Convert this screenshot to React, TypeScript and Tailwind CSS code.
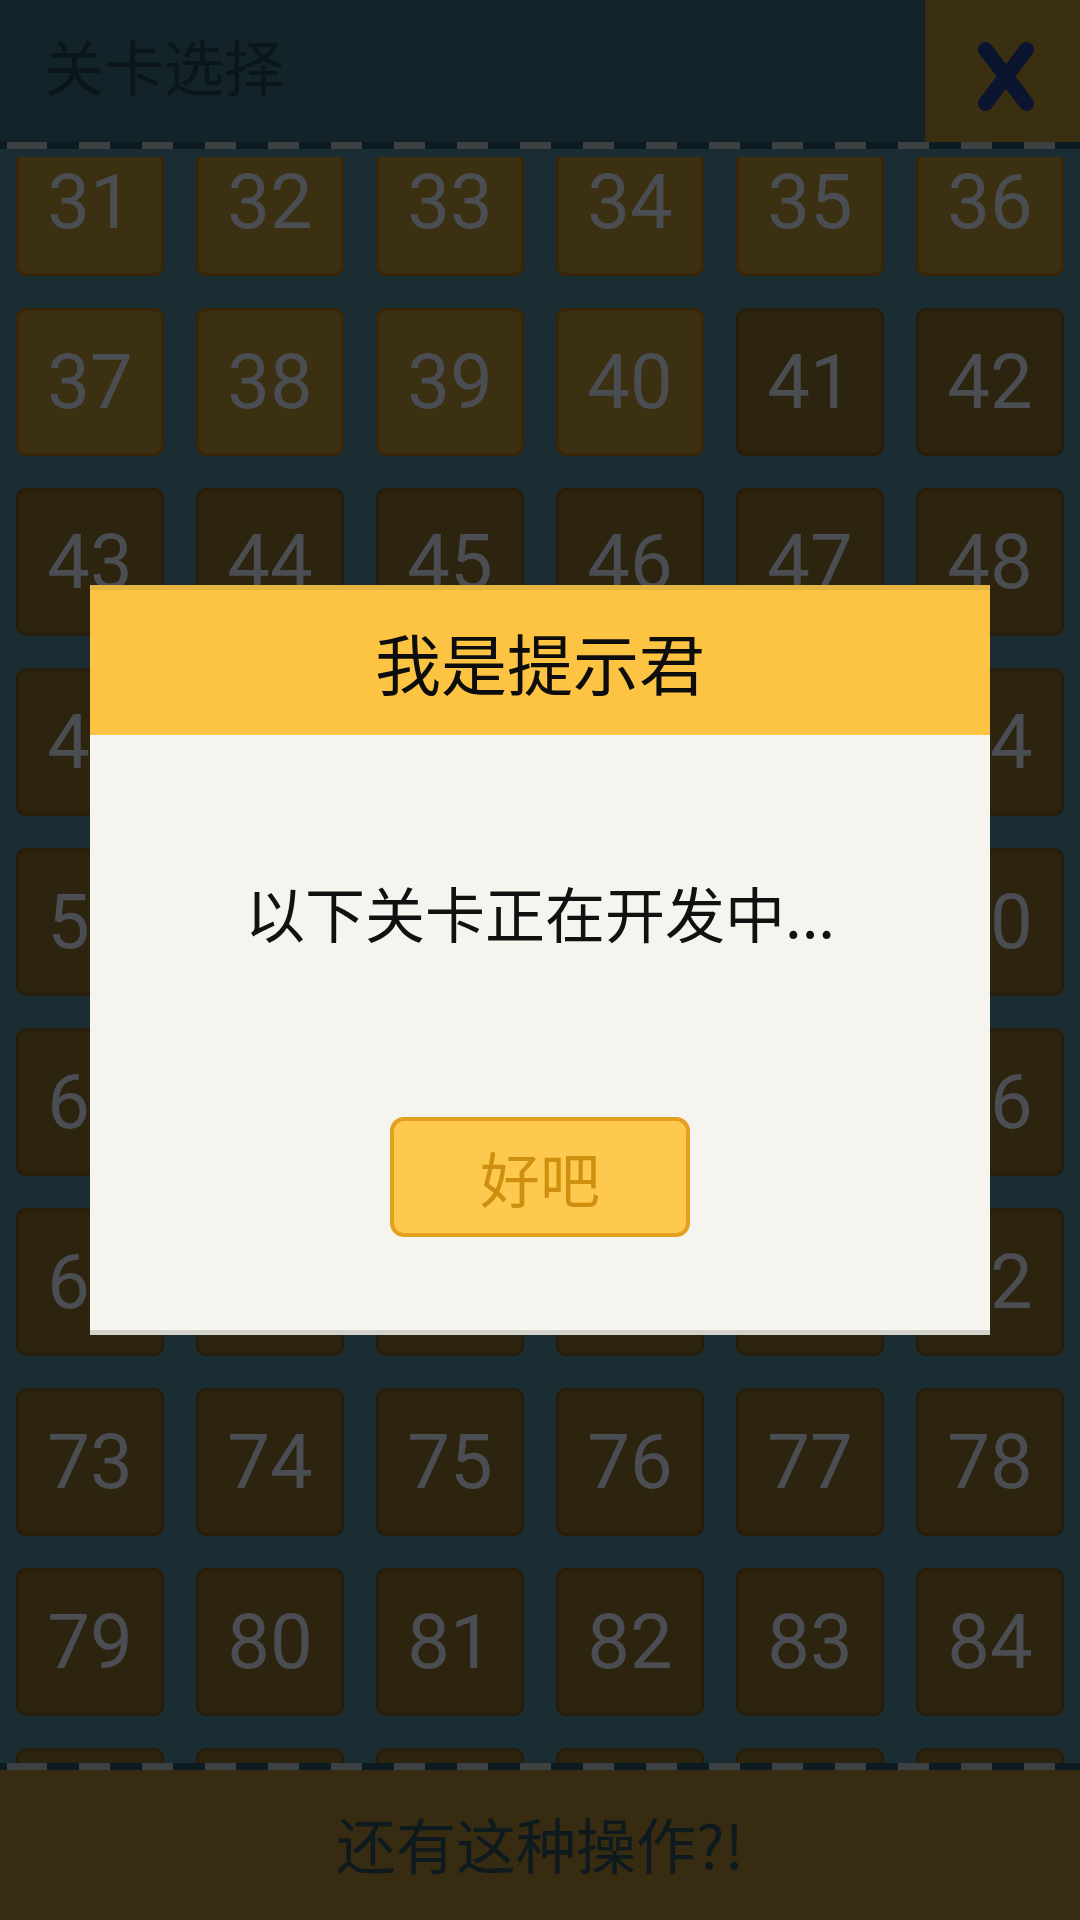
import React from "react";

const CJK = { fontFamily: '"Noto Sans CJK SC", "Noto Sans", sans-serif' };
const NUM = { fontFamily: 'Roboto, "Liberation Sans", sans-serif' };

const levels = Array.from({ length: 60 }, (_, i) => i + 31);
const UNLOCKED_MAX = 40;

function Dashes() {
  return (
    <div className="h-[7px] w-full bg-[#0c1b21] bg-[repeating-linear-gradient(90deg,#3e4143_0px,#3e4143_31px,transparent_31px,transparent_63px)] bg-[position:16px_0]" />
  );
}

function Tile({ n }: { n: number }) {
  const open = n <= UNLOCKED_MAX;
  return (
    <div
      className={
        open
          ? "flex h-[148px] w-[148px] items-center justify-center rounded-[10px] border-[3px] border-[#3a2606] bg-[#3c3012]"
          : "flex h-[148px] w-[148px] items-center justify-center rounded-[10px] border-[3px] border-[#291d09] bg-[#2d2410]"
      }
    >
      <span className="text-[76px] leading-none text-[#4a4d52]" style={NUM}>
        {n}
      </span>
    </div>
  );
}

export default function App() {
  return (
    <div className="relative flex h-[1920px] w-[1080px] flex-col overflow-hidden bg-[#192d32]" style={CJK}>
      {/* top bar */}
      <header className="flex h-[142px] shrink-0 bg-[#12242a]">
        <h1 className="flex-1 pl-[44px] pt-[35px] text-[60px] font-normal leading-[60px] text-[#0b161a]">
          关卡选择
        </h1>
        <button className="h-[142px] w-[155px] bg-[#3a2f10]">
          <svg width="155" height="142" viewBox="0 0 155 142">
            <g stroke="#0b1530" strokeWidth="15" strokeLinecap="round">
              <line x1="60.5" y1="49.5" x2="101.5" y2="103.5" />
              <line x1="101.5" y1="49.5" x2="60.5" y2="103.5" />
            </g>
          </svg>
        </button>
      </header>
      <Dashes />

      {/* level list */}
      <main className="flex min-h-0 flex-1 flex-col pt-[8px]">
        <div className="min-h-0 flex-1 overflow-hidden">
          <div className="mt-[-29px] grid grid-cols-[repeat(6,148px)] gap-[32px] px-[16px]">
            {levels.map((n) => (
              <Tile key={n} n={n} />
            ))}
          </div>
        </div>
      </main>

      <Dashes />
      <footer className="h-[150px] shrink-0 bg-[#372c12] pt-[43px] text-center text-[60px] leading-[60px] text-[#0f1a1e]">
        还有这种操作?!
      </footer>

      {/* notice dialog */}
      <div className="absolute inset-0 flex items-center justify-center">
        <div className="flex w-[900px] flex-col">
          <div className="h-[150px] border-t-[5px] border-[#e6b440] bg-[#fcc442] pt-[38px] text-center text-[66px] leading-[66px] text-[#0d0d0d]">
            我是提示君
          </div>
          <div className="flex h-[600px] flex-col items-center border-b-[5px] border-[#d3d2cc] bg-[#f5f4ee] pt-[147px]">
            <p className="text-[60px] leading-[60px] text-[#111111]">以下关卡正在开发中...</p>
            <button className="mt-[175px] flex h-[120px] w-[300px] items-center justify-center rounded-[14px] border-[4px] border-[#e2a01e] bg-[#fdc94f] text-[60px] leading-[60px] text-[#cf9010]">
              好吧
            </button>
          </div>
        </div>
      </div>
    </div>
  );
}
